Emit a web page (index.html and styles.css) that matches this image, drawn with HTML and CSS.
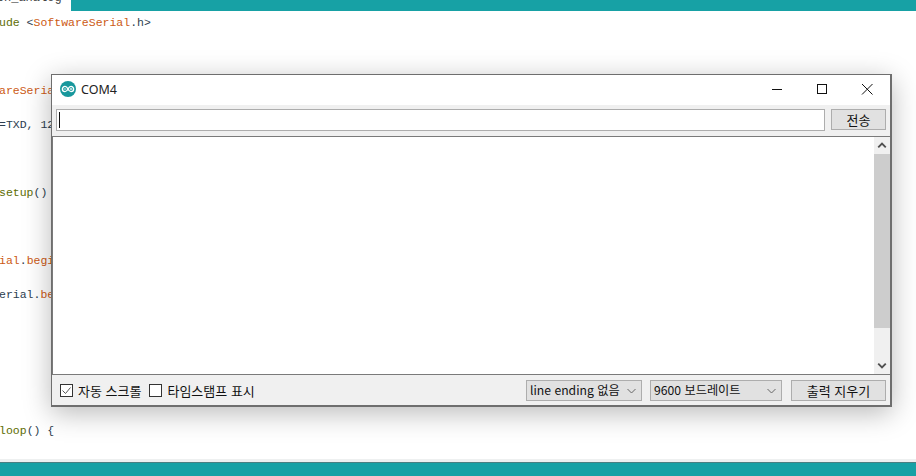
FILE: index.html
```html
<!DOCTYPE html>
<html lang="ko">
<head>
<meta charset="utf-8">
<title>COM4</title>
<link rel="stylesheet" href="styles.css">
</head>
<body>
<div class="ide">
  <div class="tabs"><div class="tab"><span class="tab-name">sketch_analog</span></div></div>
  <div class="editor">
    <div class="line"><span class="fn">#include</span> &lt;<span class="kw">SoftwareSerial</span>.h&gt;</div>
    <div class="line"></div><div class="line"></div><div class="line"></div>
    <div class="line"><span class="kw">SoftwareSerial</span> mySerial(2, 3);</div>
    <div class="line"></div>
    <div class="line">// RX=TXD, 12</div>
    <div class="line"></div><div class="line"></div><div class="line"></div>
    <div class="line"><span class="ty">void</span> <span class="fn">setup</span>()</div>
    <div class="line"></div><div class="line"></div><div class="line"></div>
    <div class="line">  <span class="kw">Serial</span>.<span class="kw">begin</span>(9600);</div>
    <div class="line"></div>
    <div class="line">  mySerial.<span class="kw">begin</span>(9600);</div>
    <div class="line"></div><div class="line"></div><div class="line"></div><div class="line"></div><div class="line"></div><div class="line"></div><div class="line"></div>
    <div class="line"><span class="ty">void</span> <span class="fn">loop</span>() {</div>
  </div>
  <div class="status"></div>
</div>

<div class="window">
  <div class="titlebar">
    <svg class="logo" viewBox="0 0 16 16" aria-hidden="true">
      <circle cx="8" cy="8" r="8" fill="#17979c"/>
      <path d="M5 5.400a2.600 2.600 0 1 0 0 5.200c1.400 0 2.200-1.100 3-2.600.8-1.500 1.600-2.600 3-2.600a2.600 2.600 0 1 1 0 5.200c-1.400 0-2.200-1.100-3-2.600-.8-1.500-1.600-2.600-3-2.600z" fill="none" stroke="#fff" stroke-width="1.400"/>
      <path d="M3.800 8h2.400M9.800 8h2.400M11 6.800v2.400" stroke="#fff" stroke-width=".8" fill="none"/>
    </svg>
    <span class="title">COM4</span>
    <div class="controls">
      <svg class="ctl" viewBox="0 0 46 30" aria-hidden="true"><path d="M20 14.500h10" stroke="#111" fill="none"/></svg>
      <svg class="ctl" viewBox="0 0 46 30" aria-hidden="true"><rect x="19.500" y="9.500" width="9" height="9" stroke="#111" fill="none"/></svg>
      <svg class="ctl" viewBox="0 0 46 30" aria-hidden="true"><path d="M18 9l10.500 10.500M28.500 9L18 19.500" stroke="#111" fill="none"/></svg>
    </div>
  </div>
  <div class="send-row">
    <div class="input"><span class="caret"></span></div>
    <div class="btn send">전송</div>
  </div>
  <div class="output">
    <div class="log"></div>
    <div class="scrollbar">
      <svg class="arrow" viewBox="0 0 17 18" aria-hidden="true"><path d="M4.500 11l4-4 4 4" stroke="#505050" stroke-width="2" fill="none"/></svg>
      <div class="track"><div class="thumb"></div></div>
      <svg class="arrow" viewBox="0 0 17 18" aria-hidden="true"><path d="M4.500 7l4 4 4-4" stroke="#505050" stroke-width="2" fill="none"/></svg>
    </div>
  </div>
  <div class="footer">
    <label class="check">
      <svg class="box" viewBox="0 0 13 13" aria-hidden="true"><rect x=".5" y=".5" width="12" height="12" fill="#fff" stroke="#333"/><path d="M2.500 6.500l3 3 5-6" stroke="#555" fill="none"/></svg>
      <span>자동 스크롤</span>
    </label>
    <label class="check">
      <svg class="box" viewBox="0 0 13 13" aria-hidden="true"><rect x=".5" y=".5" width="12" height="12" fill="#fff" stroke="#333"/></svg>
      <span>타임스탬프 표시</span>
    </label>
    <div class="spacer"></div>
    <div class="select ending"><span>line ending 없음</span>
      <svg class="chev" viewBox="0 0 9 6" aria-hidden="true"><path d="M.5 1l4 4 4-4" stroke="#666" fill="none"/></svg></div>
    <div class="select baud"><span>9600 보드레이트</span>
      <svg class="chev" viewBox="0 0 9 6" aria-hidden="true"><path d="M.5 1l4 4 4-4" stroke="#666" fill="none"/></svg></div>
    <div class="btn clear">출력 지우기</div>
  </div>
</div>
</body>
</html>
```
FILE: styles.css
```css
* { box-sizing: border-box; }
html, body { margin: 0; height: 100%; }
body {
  width: 916px;
  height: 476px;
  overflow: hidden;
  position: relative;
  background: #fff;
  font-family: "Noto Sans CJK KR", "Noto Sans", sans-serif;
  font-size: 13px;
  color: #111;
}
.ide { display: flex; flex-direction: column; height: 476px; }
.tabs { height: 11px; background: #17a1a5; flex: none; overflow: hidden; }
.tab { width: 71px; height: 11px; background: #fff; overflow: hidden; }
.tab-name {
  display: block;
  margin: -9px 0 0 -32px;
  font: 12px/14px "Liberation Mono", monospace;
  color: #444;
  white-space: nowrap;
}
.editor {
  flex: 1;
  overflow: hidden;
  padding-top: 2.950px;
  font: 11.500px/17.020px "Liberation Mono", monospace;
  color: #2c3e50;
}
.line { height: 17.020px; margin-left: -35.500px; white-space: pre; }
.kw { color: #cc5a14; }
.fn { color: #5e6d03; }
.ty { color: #00979c; }
.status {
  flex: none;
  height: 17px;
  background: #17a1a5;
  border-top: 3px solid #eef0f0;
  box-shadow: inset 0 1px 0 #4b7f82;
}
.window {
  position: absolute;
  left: 51px;
  top: 74px;
  width: 841px;
  height: 333px;
  display: flex;
  flex-direction: column;
  background: #f0f0f0;
  border: 1px solid #6e6e6e;
  border-width: 1px 2px 2px 1px;
  box-shadow: 0 6px 26px rgba(0, 0, 0, .28);
}
.titlebar {
  flex: none;
  height: 30px;
  background: #fff;
  display: flex;
  align-items: center;
  padding: 0 0 2px 8px;
}
.logo { width: 16px; height: 16px; flex: none; }
.title {
  margin-left: 5px;
  font: 12.500px "Noto Sans", sans-serif;
  color: #222;
}
.controls { margin-left: auto; display: flex; align-self: flex-start; }
.ctl { width: 46px; height: 30px; display: block; }
.send-row {
  flex: none;
  height: 31px;
  display: flex;
  gap: 6px;
  align-items: flex-start;
  padding: 4px 4px 0 4px;
}
.input {
  flex: 1;
  height: 22px;
  background: #fff;
  border: 1px solid #adadad;
  padding: 2px 0 0 2px;
}
.caret { display: block; width: 1px; height: 16px; background: #111; }
.btn, .select {
  background: #e1e1e1;
  border: 1px solid #adadad;
  display: flex;
  align-items: center;
  height: 21px;
  line-height: 1;
  white-space: nowrap;
}
.btn { justify-content: center; }
.send { width: 55px; }
.output {
  flex: 1;
  min-height: 0;
  display: flex;
  margin: 0;
  background: #fff;
  border-top: 1px solid #7a7a7a;
  border-bottom: 1px solid #7a7a7a;
  border-left: 1px solid #7a7a7a;
}
.log { flex: 1; }
.scrollbar {
  width: 16px;
  flex: none;
  background: #f0f0f0;
  display: flex;
  flex-direction: column;
}
.arrow { width: 16px; height: 17px; flex: none; display: block; }
.track { flex: 1; }
.thumb { height: 174px; background: #cdcdcd; }
.footer {
  flex: none;
  height: 30px;
  display: flex;
  align-items: center;
  padding: 1px 4px 0 8px;
}
.check { display: flex; align-items: center; gap: 5px; margin-right: 8px; white-space: nowrap; }
.box { width: 13px; height: 13px; flex: none; display: block; }
.spacer { flex: 1; }
.select { justify-content: space-between; padding: 0 3px 0 3px; margin-right: 8px; font-size: 12.200px; }
.chev { width: 9px; height: 6px; flex: none; margin-right: 2px; }
.ending { width: 116px; }
.baud { width: 132px; margin-right: 9px; }
.clear { width: 95px; }
```
